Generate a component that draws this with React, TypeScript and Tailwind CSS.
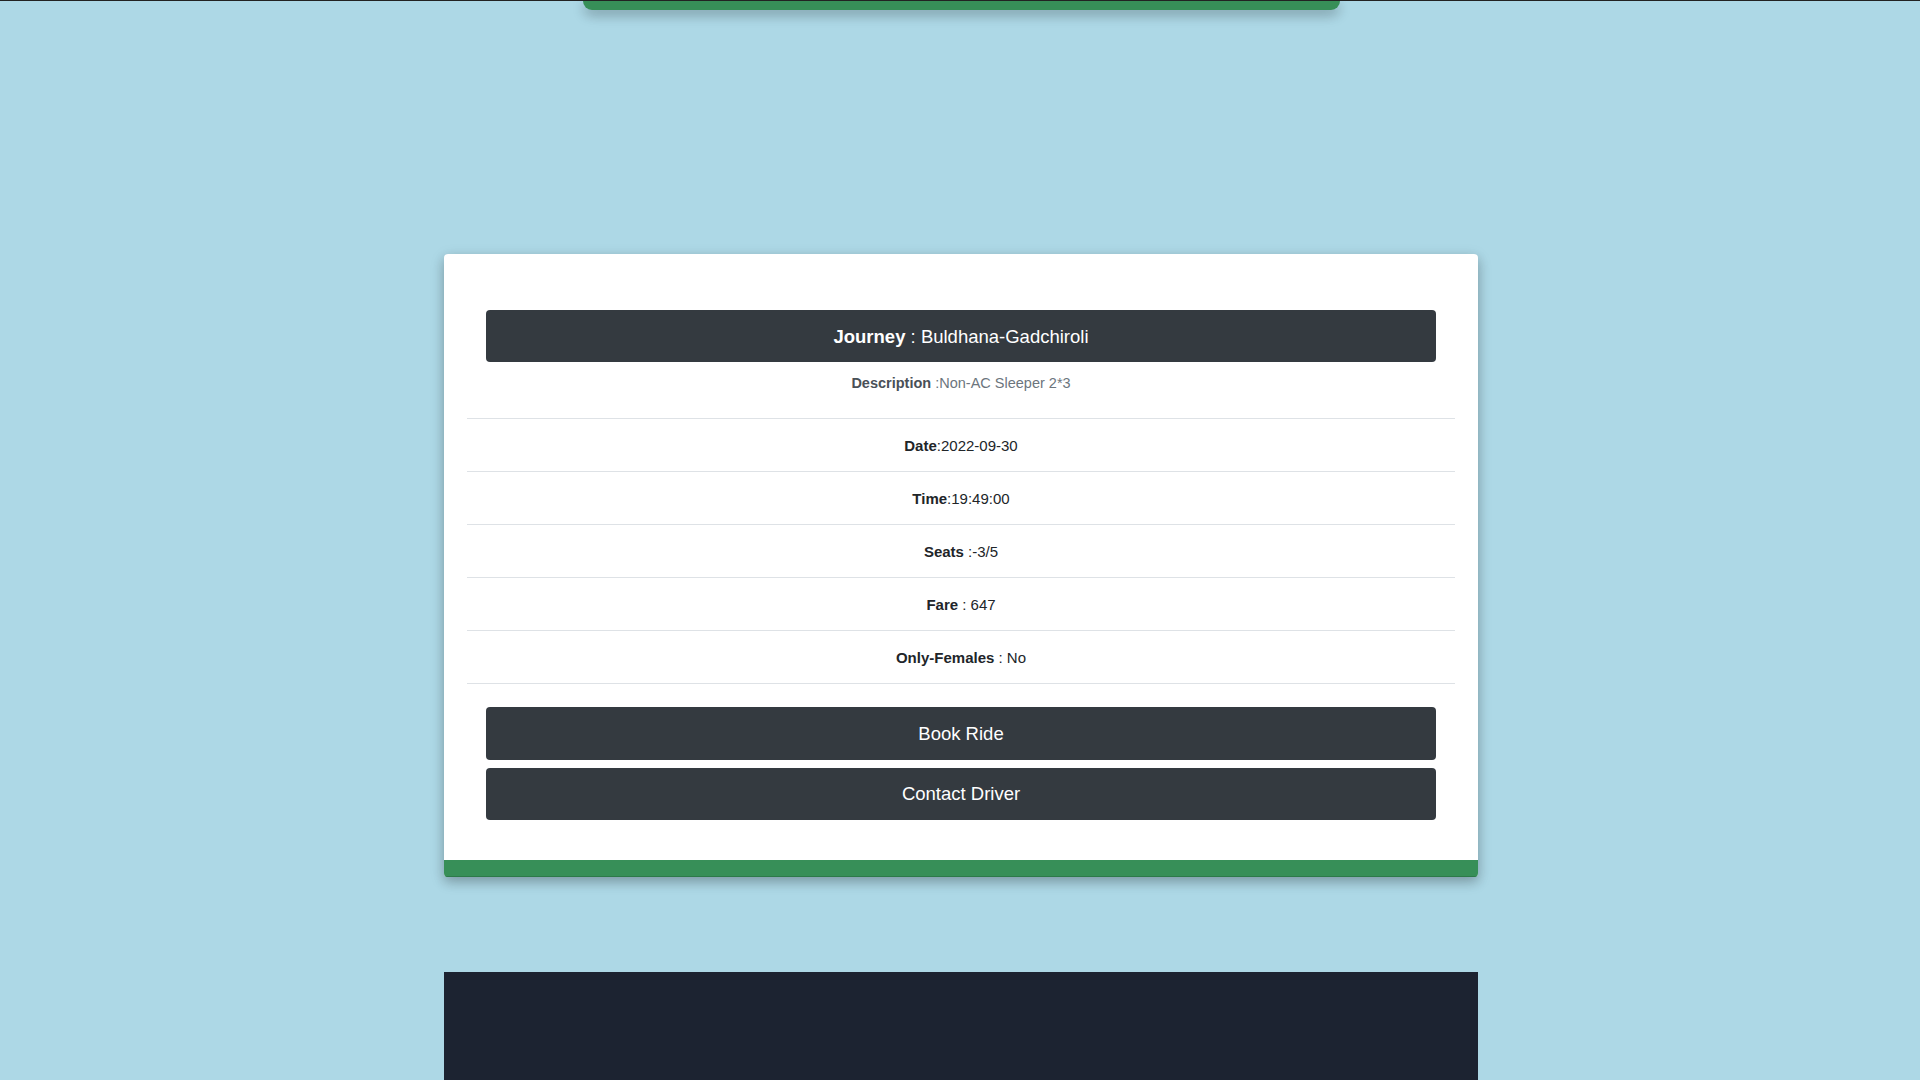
const ride = {
  journey: "Buldhana-Gadchiroli",
  description: "Non-AC Sleeper 2*3",
  date: "2022-09-30",
  time: "19:49:00",
  seats: "3/5",
  fare: "647",
  onlyFemales: "No",
};

function Row({ children }: { children: React.ReactNode }) {
  return (
    <div className="h-[53px] flex items-center justify-center pt-[2px] border-b border-[#dee2e6] text-[15px] text-[#212529]">
      <p>{children}</p>
    </div>
  );
}

function RideCard() {
  return (
    <div className="mx-auto w-[1034px] bg-white rounded-[4px] overflow-hidden shadow-[0_5px_11px_0_rgba(0,0,0,0.18),0_4px_15px_0_rgba(0,0,0,0.15)]">
      <div className="px-[23px] pt-[56px] pb-[40px]">
        <div className="mx-[19px] h-[52px] flex items-center justify-center pt-[2px] rounded-[4px] bg-[#343a40] text-white text-[18.5px]">
          <span>
            <b>Journey</b> : {ride.journey}
          </span>
        </div>

        <div className="h-[57px] pt-[11px] text-center text-[14.5px] leading-[21px] text-[#6c757d] border-b border-[#dee2e6]">
          <b className="text-[#495057]">Description</b> :{ride.description}
        </div>

        <Row>
          <b>Date</b>:{ride.date}
        </Row>
        <Row>
          <b>Time</b>:{ride.time}
        </Row>
        <Row>
          <b>Seats</b> :-{ride.seats}
        </Row>
        <Row>
          <b>Fare</b> : {ride.fare}
        </Row>
        <Row>
          <b>Only-Females</b> : {ride.onlyFemales}
        </Row>

        <div className="mx-[19px] mt-[23px] flex flex-col gap-2">
          <button className="h-[53px] w-full rounded-[4px] bg-[#343a40] text-white text-[18.5px] cursor-pointer">
            Book Ride
          </button>
          <button className="h-[52px] w-full rounded-[4px] bg-[#343a40] text-white text-[18.5px] cursor-pointer">
            Contact Driver
          </button>
        </div>
      </div>
      <div className="h-[17px] bg-[#378f58] border-b border-[#2c7a49]"></div>
    </div>
  );
}

export default function App() {
  return (
    <div
      className="h-[1080px] overflow-hidden pl-[2px] bg-[#add8e6] border-t border-[#222222]"
      style={{ fontFamily: '"Liberation Sans", Arial, sans-serif' }}
    >
      {/* bottom of the previous card, scrolled past */}
      <div className="mx-auto w-[757px] h-[9px] bg-[#378f58] rounded-b-[10px] shadow-[0_5px_11px_0_rgba(0,0,0,0.18),0_4px_15px_0_rgba(0,0,0,0.15)]"></div>

      <div className="mt-[244px]">
        <RideCard />
      </div>

      <footer className="mx-auto mt-[95px] w-[1034px] h-[200px] bg-[#1c2331]"></footer>
    </div>
  );
}
